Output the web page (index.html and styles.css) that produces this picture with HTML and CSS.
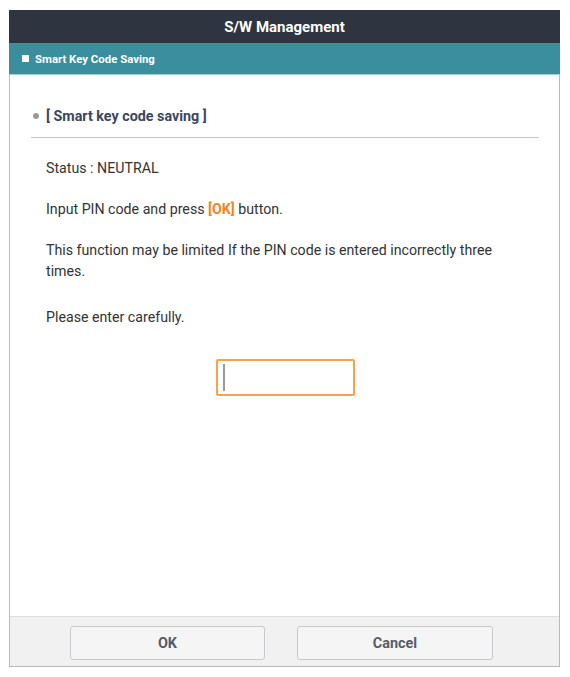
FILE: index.html
```html
<!DOCTYPE html>
<html>
<head>
<meta charset="utf-8">
<link rel="stylesheet" href="styles.css">
</head>
<body>
<div class="frame">
  <div class="titlebar">S/W Management</div>
  <div class="subbar"><span class="sq"></span><span>Smart Key Code Saving</span></div>
  <div class="content">
    <div class="heading"><span class="dot"></span><span>[ Smart key code saving ]</span></div>
    <p class="txt">Status : NEUTRAL</p>
    <p class="txt">Input PIN code and press <b class="ok">[OK]</b> button.</p>
    <p class="txt">This function may be limited If the PIN code is entered incorrectly three times.</p>
    <p class="txt txt-last">Please enter carefully.</p>
    <div class="pinrow"><div class="pin"><span class="caret"></span></div></div>
  </div>
  <div class="footer">
    <button class="btn btn-ok">OK</button>
    <button class="btn btn-cancel">Cancel</button>
  </div>
</div>
</body>
</html>
```
FILE: styles.css
```css
html, body { margin: 0; padding: 0; background: #fff; }
body { font-family: Roboto, "Liberation Sans", sans-serif; }
.frame {
  margin: 10px 0 0 9px;
  width: 551px;
  height: 657px;
  box-sizing: border-box;
  border: 1px solid #b9b9bb;
  border-top: none;
  display: flex;
  flex-direction: column;
}
.titlebar {
  height: 33px;
  margin: 0 -1px;
  background: #2e3440;
  color: #fff;
  font-weight: 700;
  font-size: 15px;
  display: flex;
  align-items: center;
  justify-content: center;
}
.subbar {
  height: 31px;
  margin: 0 -1px;
  background: #3a8e9e;
  border-bottom: 1px solid #9fd0d7;
  color: #fff;
  font-weight: 700;
  font-size: 11.4px;
  display: flex;
  align-items: center;
  padding-left: 13px;
  gap: 6px;
}
.sq { width: 7px; height: 7px; background: #fff; display: block; }
.content {
  flex: 1;
  padding: 0 20px 0 21px;
}
.heading {
  margin-top: 31px;
  height: 20px;
  padding: 0 0 11px 2px;
  border-bottom: 1.5px solid #a3d4dc;
  display: flex;
  align-items: center;
  gap: 7px;
  color: #3b4660;
  font-weight: 700;
  font-size: 14.3px;
}
.dot { width: 6px; height: 6px; border-radius: 50%; background: #9a9a9a; display: block; }
.txt {
  margin: 20px 10px 0 15px;
  font-size: 14.2px;
  line-height: 21px;
  color: #333;
}
.txt + .txt { margin-top: 20px; }
.txt-last { margin-top: 25px !important; }
.ok { color: #f5821f; font-weight: 700; }
.pinrow { display: flex; justify-content: center; margin-top: 31px; }
.pin {
  width: 139px;
  height: 37px;
  box-sizing: border-box;
  border: 2px solid #f9a24d;
  border-radius: 2px;
  display: flex;
  align-items: center;
  padding-left: 5px;
}
.caret { width: 2px; height: 27px; background: #9b9b9b; display: block; }
.footer {
  height: 50px;
  box-sizing: border-box;
  background: #f1f1f2;
  border-top: 1px solid #dedee0;
  display: flex;
  align-items: flex-start;
  padding: 9px 0 0 60px;
  gap: 32px;
}
.btn {
  width: 195px;
  height: 34px;
  background: #f5f5f6;
  border: 1px solid #c9c9cd;
  border-radius: 3px;
  font-family: Roboto, "Liberation Sans", sans-serif;
  font-weight: 700;
  font-size: 14.4px;
  color: #555b66;
  padding: 0;
}
.btn-cancel { width: 196px; }
```
